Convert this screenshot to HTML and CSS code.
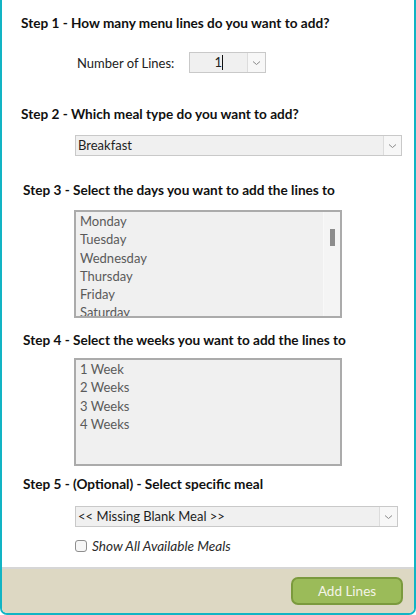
FILE: index.html
```html
<!DOCTYPE html>
<html lang="en">
<head>
<meta charset="utf-8">
<title>Add Menu Lines</title>
<link rel="stylesheet" href="styles.css">
</head>
<body>
<div class="window">
  <div class="content">
    <h2 class="step-title t1">Step 1 - How many menu lines do you want to add?</h2>
    <div class="lines-row">
      <span class="lines-label">Number of Lines:</span>
      <div class="spin">
        <span class="spin-value">1<span class="caret"></span></span>
        <span class="drop-btn"><svg width="9" height="6" viewBox="0 0 9 6"><path d="M1 1.5 L4.5 4.5 L8 1.5" fill="none" stroke="#8a8a8a" stroke-width="1"/></svg></span>
      </div>
    </div>

    <h2 class="step-title t2">Step 2 - Which meal type do you want to add?</h2>
    <div class="combo combo-meal">
      <span class="combo-text">Breakfast</span>
      <span class="drop-btn"><svg width="9" height="6" viewBox="0 0 9 6"><path d="M1 1.5 L4.5 4.5 L8 1.5" fill="none" stroke="#8a8a8a" stroke-width="1"/></svg></span>
    </div>

    <h2 class="step-title t3">Step 3 - Select the days you want to add the lines to</h2>
    <div class="listbox list-days">
      <ul class="list-items">
        <li>Monday</li>
        <li>Tuesday</li>
        <li>Wednesday</li>
        <li>Thursday</li>
        <li>Friday</li>
        <li>Saturday</li>
      </ul>
      <div class="scrollbar"><span class="thumb"></span></div>
    </div>

    <h2 class="step-title t4">Step 4 - Select the weeks you want to add the lines to</h2>
    <div class="listbox list-weeks">
      <ul class="list-items">
        <li>1 Week</li>
        <li>2 Weeks</li>
        <li>3 Weeks</li>
        <li>4 Weeks</li>
      </ul>
    </div>

    <h2 class="step-title t5">Step 5 - (Optional) - Select specific meal</h2>
    <div class="combo combo-specific">
      <span class="combo-text">&lt;&lt; Missing Blank Meal &gt;&gt;</span>
      <span class="drop-btn"><svg width="9" height="6" viewBox="0 0 9 6"><path d="M1 1.5 L4.5 4.5 L8 1.5" fill="none" stroke="#8a8a8a" stroke-width="1"/></svg></span>
    </div>
    <label class="check-row">
      <span class="checkbox"></span>
      <span class="check-label">Show All Available Meals</span>
    </label>
  </div>
  <div class="footer">
    <button class="add-btn" type="button">Add Lines</button>
  </div>
</div>
</body>
</html>
```

FILE: styles.css
```css
html, body {
  margin: 0;
  padding: 0;
  background: #ffffff;
}

body {
  font-family: "Lato", "Liberation Sans", sans-serif;
  color: #1a1a1a;
}

.window {
  width: 416px;
  height: 615px;
  box-sizing: border-box;
  border-left: 2px solid #12b4c4;
  border-right: 2px solid #12b4c4;
  border-bottom: 2px solid #12b4c4;
  border-radius: 0 0 7px 7px;
  display: flex;
  flex-direction: column;
  overflow: hidden;
  background: #ffffff;
}

.content {
  flex: 1;
  display: flex;
  flex-direction: column;
  align-items: flex-start;
}

.step-title {
  margin: 0;
  font-size: 13.6px;
  line-height: 16px;
  font-weight: 700;
  color: #111111;
  white-space: nowrap;
}

.t1 { margin: 15px 0 0 19px; }
.t2 { margin: 33px 0 0 19px; }
.t3 { margin: 26px 0 0 21px; }
.t4 { margin: 14px 0 0 21px; }
.t5 { margin: 10px 0 0 21px; }

.lines-row {
  margin: 21px 0 0 75px;
  display: flex;
  align-items: center;
  gap: 12px;
}

.lines-label {
  font-size: 13px;
  color: #222222;
  width: 100px;
}

.spin {
  width: 77px;
  height: 21px;
  box-sizing: border-box;
  border: 1px solid #c9c9c9;
  background: #f0f0f0;
  display: flex;
}

.spin-value {
  flex: 1;
  text-align: right;
  padding-right: 24px;
  font-size: 13px;
  line-height: 19px;
  color: #222222;
}

.caret {
  display: inline-block;
  width: 1px;
  height: 15px;
  background: #111111;
  vertical-align: -3px;
}

.drop-btn {
  width: 17px;
  border-left: 1px solid #dcdcdc;
  background: #f7f7f7;
  display: flex;
  align-items: center;
  justify-content: center;
}

.combo {
  height: 21px;
  box-sizing: border-box;
  border: 1px solid #c9c9c9;
  background: #f0f0f0;
  display: flex;
}

.combo-meal { width: 327px; margin: 13px 0 0 73px; }
.combo-specific { width: 323px; margin: 14px 0 0 73px; }

.combo-text {
  flex: 1;
  padding-left: 2px;
  font-size: 13px;
  line-height: 19px;
  color: #1e1e1e;
  white-space: nowrap;
}

.listbox {
  width: 268px;
  height: 108px;
  box-sizing: border-box;
  border: 2px solid #ababab;
  background: #f0f0f0;
  display: flex;
  overflow: hidden;
}

.list-days { margin: 12px 0 0 72px; }
.list-weeks { margin: 10px 0 0 72px; }

.list-items {
  flex: 1;
  list-style: none;
  margin: 0;
  padding: 0 0 0 4px;
}

.list-items li {
  font-size: 13px;
  line-height: 18.3px;
  color: #5a5a5a;
  white-space: nowrap;
}

.scrollbar {
  width: 17px;
  background: #f4f4f4;
  border-left: 1px solid #f8f8f8;
  display: flex;
  justify-content: center;
  padding-top: 17px;
  box-sizing: border-box;
}

.thumb {
  width: 5px;
  height: 17px;
  background: #8c8c8c;
}

.check-row {
  margin: 11px 0 0 73px;
  display: flex;
  align-items: center;
  gap: 5px;
}

.checkbox {
  width: 12px;
  height: 12px;
  box-sizing: border-box;
  border: 1px solid #8e8e8e;
  border-radius: 3px;
  background: #f6f6f6;
}

.check-label {
  font-size: 13.6px;
  font-style: italic;
  color: #2a2a2a;
}

.footer {
  height: 46px;
  box-sizing: border-box;
  border-top: 2px solid #d6d6d6;
  background: #ddd8c3;
  display: flex;
  justify-content: flex-end;
  align-items: flex-start;
  padding: 8px 11px 0 0;
}

.add-btn {
  width: 112px;
  height: 28px;
  box-sizing: border-box;
  border: 2px solid #7b9a3d;
  border-radius: 7px;
  background: #9bbb59;
  color: #f4f4e8;
  font-family: "Lato", "Liberation Sans", sans-serif;
  font-size: 13.5px;
  padding: 0;
}
```
